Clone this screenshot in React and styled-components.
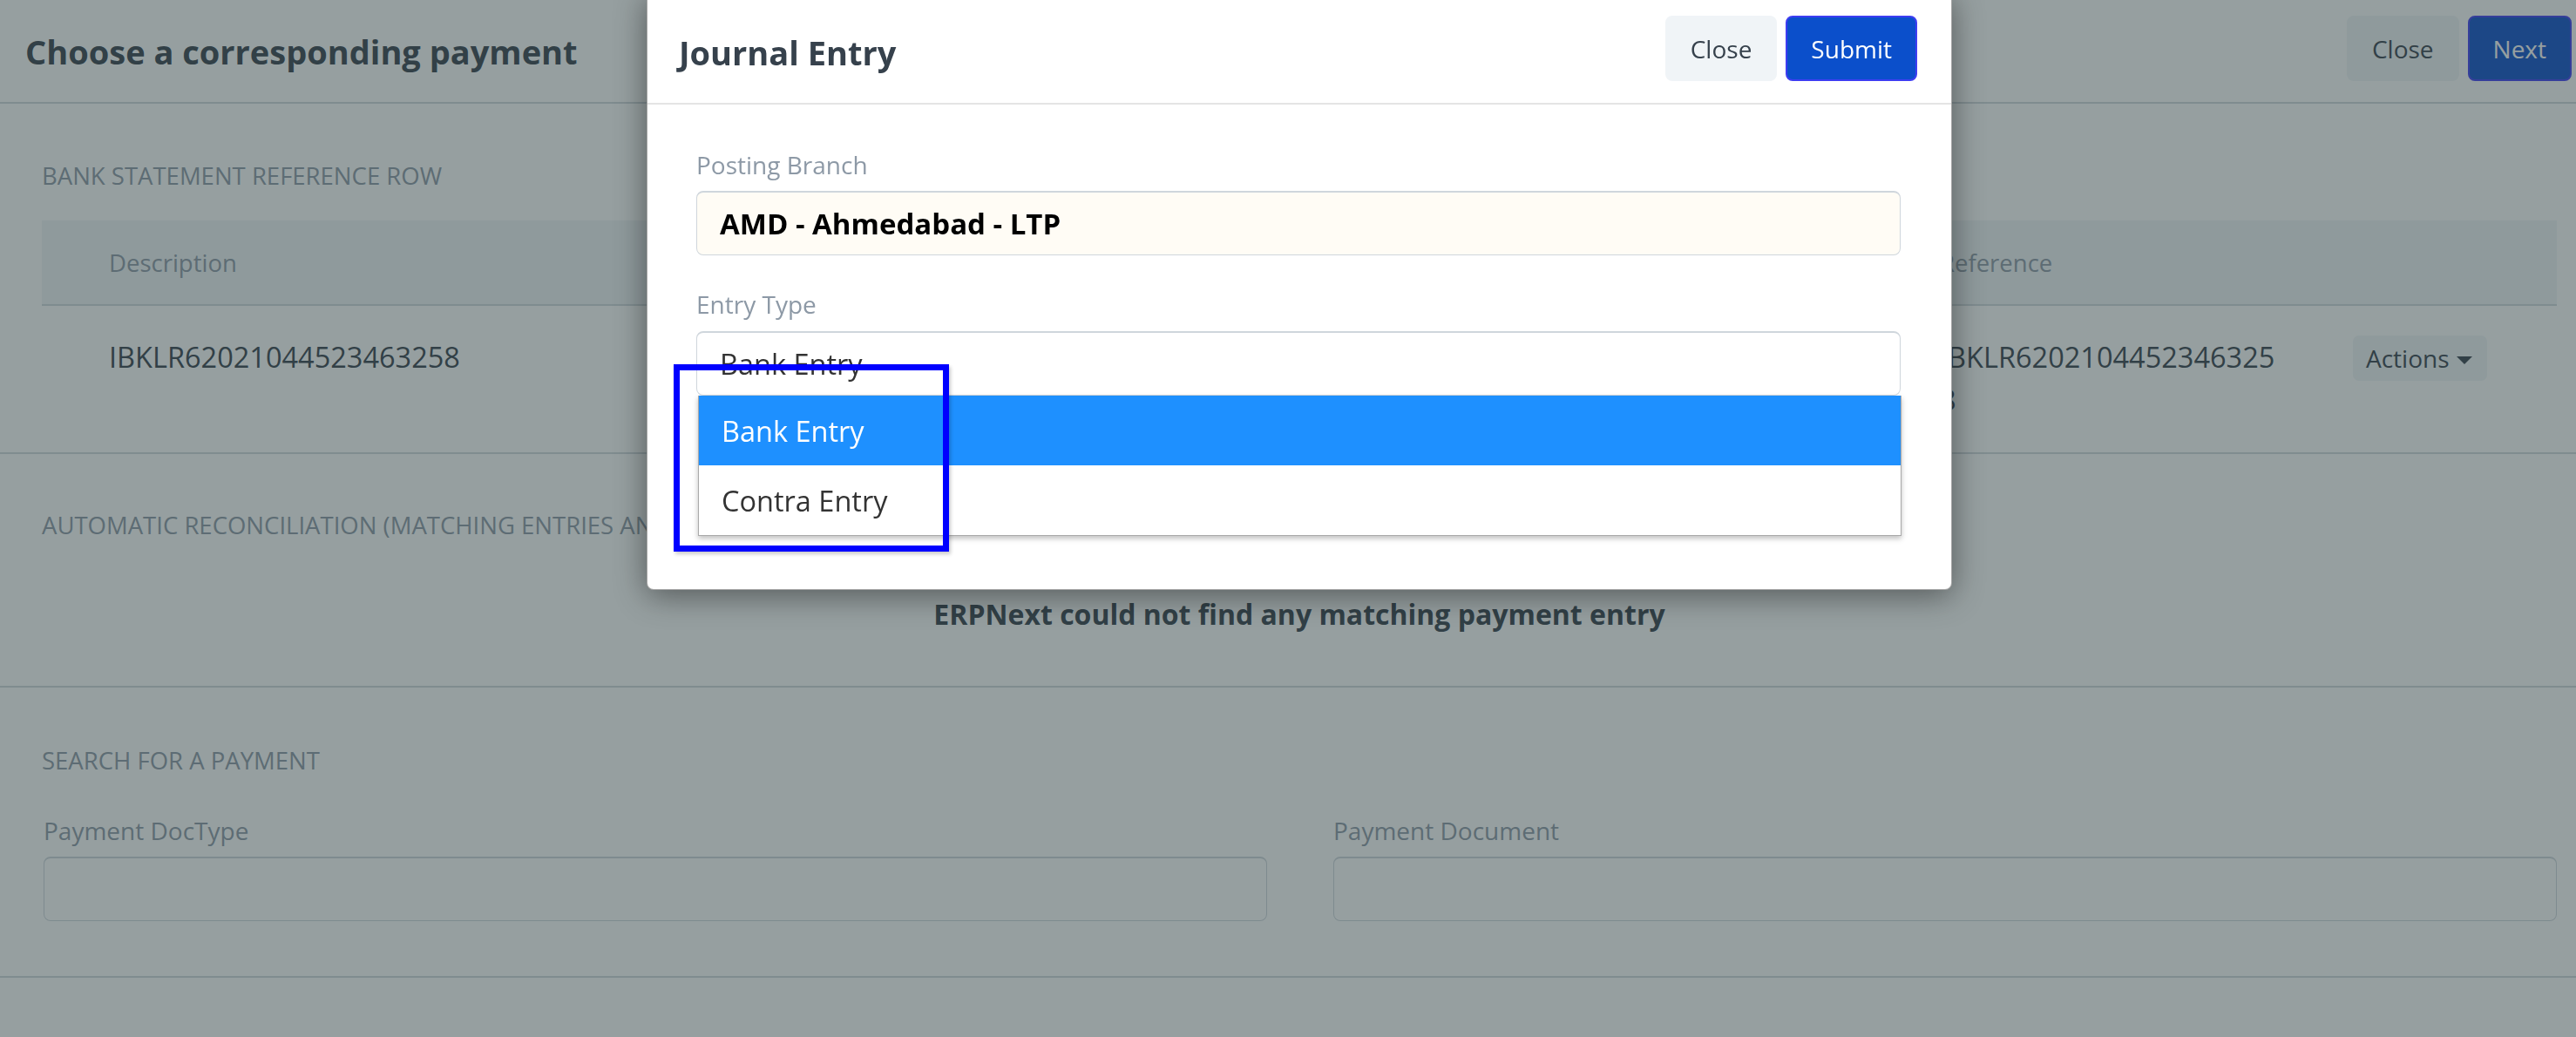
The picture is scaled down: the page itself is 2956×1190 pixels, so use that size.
import React from 'react'
import styled, { createGlobalStyle } from 'styled-components'

const GlobalStyle = createGlobalStyle`
  * { box-sizing: border-box; }
  html, body {
    margin: 0;
    padding: 0;
    background: #ffffff;
    font-family: "Open Sans", "Noto Sans", sans-serif;
    color: #36414c;
    overflow: hidden;
  }
`

const Page = styled.div`
  width: 2956px;
  height: 1190px;
  background: #ffffff;
`

const TopBar = styled.div`
  height: 119px;
  display: flex;
  align-items: center;
  justify-content: space-between;
  padding: 0 5px 6px 29px;
  border-bottom: 2px solid #d1d8dd;
`

const PageTitle = styled.h1`
  margin: 0;
  padding-top: 7px;
  font-size: 38px;
  font-weight: 700;
  color: #36414c;
  line-height: 50px;
`

const ButtonRow = styled.div`
  display: flex;
  gap: 10px;
`

const Button = styled.button`
  height: 75px;
  padding: 0 27px;
  border-radius: 8px;
  font-family: inherit;
  font-size: 28px;
  line-height: 1;
  border: 2px solid ${p => (p.$primary ? '#3d3df2' : '#f0f4f7')};
  background: ${p => (p.$primary ? '#0b4fcb' : '#f0f4f7')};
  color: ${p => (p.$primary ? '#ffffff' : '#36414c')};
`

const Section = styled.div`
  padding: ${p => p.$pad || '64px 22px 0 48px'};
  border-bottom: 2px solid #d1d8dd;
`

const SectionTitle = styled.div`
  font-size: 27.5px;
  line-height: 38px;
  color: #8d99a6;
  text-transform: uppercase;
  white-space: nowrap;
`

const Table = styled.div`
  margin-top: 32px;
`

const Row = styled.div`
  display: grid;
  grid-template-columns: 1fr 396px 234px;
  column-gap: 78px;
  padding-left: 77px;
`

const HeadRow = styled(Row)`
  height: 98px;
  align-items: center;
  background: #f0f4f7;
  border-bottom: 2px solid #d1d8dd;
  font-size: 27.5px;
  color: #8d99a6;
`

const DataRow = styled(Row)`
  padding-top: 34px;
  padding-bottom: 36px;
  align-items: start;
  font-size: 32.5px;
  line-height: 49px;
  color: #36414c;
`

const RefCell = styled.div`
  word-break: break-all;
`

const ActionsButton = styled.div`
  width: 154px;
  height: 52px;
  display: flex;
  align-items: center;
  gap: 8px;
  padding-left: 15px;
  border-radius: 7px;
  background: #f0f4f7;
  font-size: 28px;
  color: #36414c;
`

const Caret = styled.span`
  width: 0;
  height: 0;
  margin-top: 4px;
  border-left: 9px solid transparent;
  border-right: 9px solid transparent;
  border-top: 9px solid #36414c;
`

const Message = styled.div`
  margin-top: 61px;
  text-align: center;
  font-size: 32px;
  line-height: 44px;
  font-weight: 700;
  color: #36414c;
`

const FieldGrid = styled.div`
  margin-top: 42px;
  display: grid;
  grid-template-columns: 1fr 1fr;
  column-gap: 76px;
  padding-left: 2px;
`

const Label = styled.div`
  font-size: 28px;
  line-height: 38px;
  color: #8d99a6;
  white-space: nowrap;
`

const Input = styled.div`
  position: relative;
  margin-top: ${p => p.$gap || '11px'};
  height: 74px;
  display: flex;
  align-items: center;
  padding-left: 26px;
  border: 1px solid #cfd6dc;
  border-top-width: 2px;
  border-radius: 8px;
  background: ${p => p.$bg || '#ffffff'};
  font-size: ${p => (p.$bold ? '33px' : '32.5px')};
  font-weight: ${p => (p.$bold ? 700 : 400)};
  color: ${p => (p.$bold ? '#000000' : '#333333')};
  white-space: nowrap;
`

const Backdrop = styled.div`
  position: fixed;
  inset: 0;
  background: rgba(46, 64, 66, 0.5);
`

const Dialog = styled.div`
  position: fixed;
  left: 742px;
  top: -8px;
  width: 1498px;
  background: #ffffff;
  border: 1px solid rgba(0, 0, 0, 0.35);
  border-radius: 8px;
  box-shadow: 0 6px 36px rgba(0, 0, 0, 0.45);
`

const DialogHeader = styled.div`
  height: 127px;
  display: flex;
  align-items: center;
  justify-content: space-between;
  padding: 0 39px 0 36px;
  border-bottom: 2px solid #e4e4e4;
`

const DialogTitle = styled.h2`
  margin: 0;
  padding-top: 8px;
  font-size: 38px;
  line-height: 50px;
  font-weight: 700;
  color: #36414c;
`

const DialogBody = styled.div`
  padding: 50px 58px 222px 56px;
`

const Field = styled.div`
  margin-top: ${p => p.$top || '0'};
`

const OptionList = styled.div`
  position: absolute;
  top: 72px;
  left: 1px;
  right: -2px;
  background: #ffffff;
  border: 1px solid #a9a9a9;
  border-top: none;
  box-shadow: 0 3px 6px rgba(0, 0, 0, 0.25);
  z-index: 2;
`

const Option = styled.div`
  height: 80px;
  display: flex;
  align-items: center;
  padding-left: 26px;
  font-size: 32.5px;
  font-weight: 400;
  background: ${p => (p.$selected ? '#1e90ff' : '#ffffff')};
  color: ${p => (p.$selected ? '#ffffff' : '#333333')};
`

const Highlight = styled.div`
  position: absolute;
  left: 30px;
  top: 425px;
  width: 316px;
  height: 215px;
  border: 7px solid #0000ff;
  box-shadow: 2px 3px 4px rgba(0, 0, 0, 0.2);
  z-index: 3;
`

export default function App() {
  return (
    <>
      <GlobalStyle />
      <Page>
        <TopBar>
          <PageTitle>Choose a corresponding payment</PageTitle>
          <ButtonRow>
            <Button>Close</Button>
            <Button $primary>Next</Button>
          </ButtonRow>
        </TopBar>

        <Section>
          <SectionTitle>Bank Statement Reference Row</SectionTitle>
          <Table>
            <HeadRow>
              <div>Description</div>
              <div>Reference</div>
              <div />
            </HeadRow>
            <DataRow>
              <div>IBKLR62021044523463258</div>
              <RefCell>IBKLR62021044523463258</RefCell>
              <ActionsButton>
                Actions <Caret />
              </ActionsButton>
            </DataRow>
          </Table>
        </Section>

        <Section $pad="63px 22px 60px 48px">
          <SectionTitle>Automatic Reconciliation (Matching entries and documents)</SectionTitle>
          <Message>ERPNext could not find any matching payment entry</Message>
        </Section>

        <Section $pad="65px 22px 63px 48px">
          <SectionTitle>Search for a payment</SectionTitle>
          <FieldGrid>
            <div>
              <Label>Payment DocType</Label>
              <Input />
            </div>
            <div>
              <Label>Payment Document</Label>
              <Input />
            </div>
          </FieldGrid>
        </Section>
      </Page>

      <Backdrop />

      <Dialog>
        <DialogHeader>
          <DialogTitle>Journal Entry</DialogTitle>
          <ButtonRow>
            <Button>Close</Button>
            <Button $primary>Submit</Button>
          </ButtonRow>
        </DialogHeader>
        <DialogBody>
          <Field>
            <Label>Posting Branch</Label>
            <Input $bg="#fffcf5" $bold>AMD - Ahmedabad - LTP</Input>
          </Field>
          <Field $top="37px">
            <Label>Entry Type</Label>
            <Input $gap="12px">
              Bank Entry
              <OptionList>
                <Option $selected>Bank Entry</Option>
                <Option>Contra Entry</Option>
              </OptionList>
            </Input>
          </Field>
        </DialogBody>
        <Highlight />
      </Dialog>
    </>
  )
}
